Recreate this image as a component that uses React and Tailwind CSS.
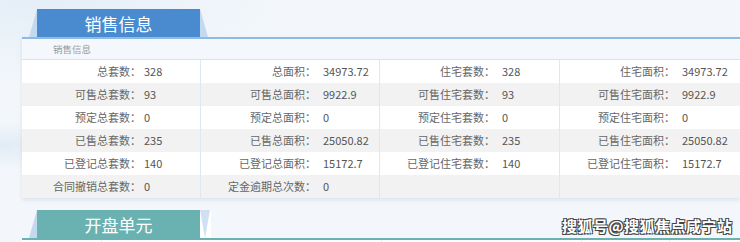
import React from "react";

const rows = [
  [["总套数", "328"], ["总面积", "34973.72"], ["住宅套数", "328"], ["住宅面积", "34973.72"]],
  [["可售总套数", "93"], ["可售总面积", "9922.9"], ["可售住宅套数", "93"], ["可售住宅面积", "9922.9"]],
  [["预定总套数", "0"], ["预定总面积", "0"], ["预定住宅套数", "0"], ["预定住宅面积", "0"]],
  [["已售总套数", "235"], ["已售总面积", "25050.82"], ["已售住宅套数", "235"], ["已售住宅面积", "25050.82"]],
  [["已登记总套数", "140"], ["已登记总面积", "15172.7"], ["已登记住宅套数", "140"], ["已登记住宅面积", "15172.7"]],
  [["合同撤销总套数", "0"], ["定金逾期总次数", "0"], null, null],
];

function Tab({ title, color, vRight }) {
  return (
    <div className="flex ml-[29px] h-[28px]">
      <div className="w-0 h-0 border-l-[8px] border-l-transparent border-b-[28px] border-b-[#c3d9ef]" />
      <div className={"w-[163px] h-[28px] flex items-center justify-center text-white text-[17px] leading-none " + color}>
        {title}
      </div>
      {vRight ? (
        <div className="w-[11px] h-[28px] bg-white">
          <div className="w-0 h-0 border-l-[5px] border-l-transparent border-r-[5px] border-r-transparent border-t-[28px] border-t-[#cfe0f2]" />
        </div>
      ) : (
        <div className="w-0 h-0 border-r-[8px] border-r-transparent border-b-[28px] border-b-[#c3d9ef]" />
      )}
    </div>
  );
}

function Cell({ item, first, last }) {
  return (
    <div className={"flex items-center h-[23px] " + (last ? "" : "border-r border-[#dce8f3]")}>
      {item && (
        <>
          <span className={"text-right text-[#666] " + (first ? "w-[119px] mr-[3px]" : "w-[115px] mr-[7px]")}>
            {item[0]}：
          </span>
          <span className="text-[#555]">{item[1]}</span>
        </>
      )}
    </div>
  );
}

export default function App() {
  return (
    <div
      className="relative w-[740px] h-[242px] overflow-hidden bg-[#f3f7fb] bg-[radial-gradient(ellipse_at_0%_60%,#e2ecf5_0%,transparent_12%),radial-gradient(ellipse_at_5%_0%,#e4eef7_0%,transparent_25%)] text-[11px]"
      style={{ fontFamily: '"Noto Sans CJK SC", "Noto Sans", sans-serif' }}
    >
      <div className="pt-[9px]">
        <Tab title="销售信息" color="bg-[#4a8bd0]" />
        <div className="ml-[22px] bg-white border-t-2 border-[#8dbbe6] shadow-[0_2px_4px_rgba(150,170,190,0.25)]">
          <div className="h-[21px] flex items-center pl-[31px] text-[9.5px] text-[#999] bg-[#f4f8fc] border-b border-[#d3e4f2]">
            销售信息
          </div>
          {rows.map((row, i) => (
            <div
              key={i}
              className={"grid grid-cols-[179px_179px_180px_1fr] " + (i % 2 === 1 ? "bg-[#f2f2f2]" : "bg-white")}
            >
              {row.map((item, j) => (
                <Cell key={j} item={item} first={j === 0} last={j === 3} />
              ))}
            </div>
          ))}
        </div>
        <div className="mt-[12px]">
          <Tab title="开盘单元" color="bg-[#6ab2b1]" vRight />
          <div className="ml-[22px] bg-white border-t-2 border-[#6ab2b1] h-[20px] grid grid-cols-[80px_280px_200px_88px_1fr]">
            <div className="border-r border-[#e3ecf2]" />
            <div className="border-r border-[#e3ecf2]" />
            <div className="border-r border-[#e3ecf2]" />
            <div className="border-r border-[#e3ecf2]" />
            <div />
          </div>
        </div>
      </div>
      <div className="absolute left-[562px] top-[215px] text-[15px] font-bold text-white tracking-[0.5px] [text-shadow:1px_1px_0_#444,-1px_-1px_0_#444,1px_-1px_0_#444,-1px_1px_0_#444]">
        搜狐号@搜狐焦点咸宁站
      </div>
    </div>
  );
}
